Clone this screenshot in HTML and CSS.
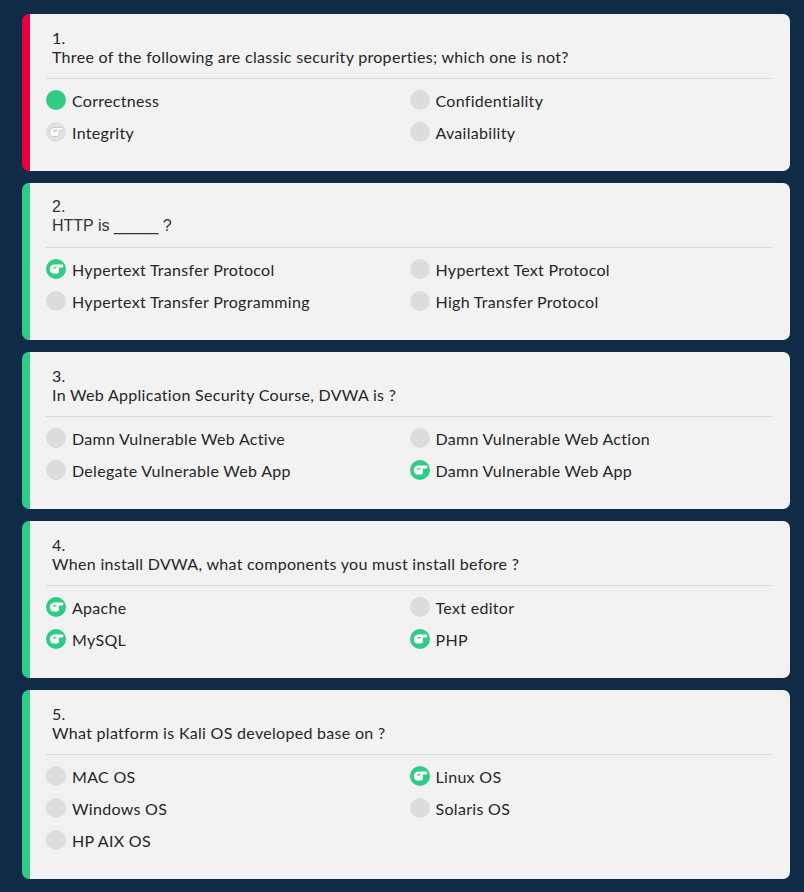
FILE: index.html
```html
<!DOCTYPE html>
<html>
<head>
<meta charset="utf-8">
<link rel="stylesheet" href="styles.css">
</head>
<body>
<svg width="0" height="0" class="defs">
  <defs>
    <symbol id="hand" viewBox="0 0 20 20">
      <path d="M3.8 10.4 C3.8 7.4 5.9 5.4 8.9 5.4 L15.9 5.4 C16.8 5.4 17.4 6.1 17.4 6.9 C17.4 7.7 16.8 8.4 15.9 8.4 L12.9 8.4 L12.9 12.6 C12.9 13.8 12.1 14.6 10.9 14.6 L8 14.6 C5.7 14.6 3.8 12.8 3.8 10.4 Z M6.9 8.9 C7.2 9.7 8 9.9 8.8 9.6 L11 8.6 L11 7.9 L8.4 8.1 Z" fill-rule="evenodd"/>
    </symbol>
  </defs>
</svg>
<main class="quiz">
  <section class="card wrong">
    <div class="question"><div>1.</div><div>Three of the following are classic security properties; which one is not?</div></div>
    <div class="options">
      <div class="opt"><span class="dot filled"></span>Correctness</div>
      <div class="opt"><span class="dot"></span>Confidentiality</div>
      <div class="opt"><span class="dot ghost"><svg><use href="#hand"/></svg></span>Integrity</div>
      <div class="opt"><span class="dot"></span>Availability</div>
    </div>
  </section>
  <section class="card right">
    <div class="question arial"><div>2.</div><div>HTTP is _____ ?</div></div>
    <div class="options">
      <div class="opt"><span class="dot pick"><svg><use href="#hand"/></svg></span>Hypertext Transfer Protocol</div>
      <div class="opt"><span class="dot"></span>Hypertext Text Protocol</div>
      <div class="opt"><span class="dot"></span>Hypertext Transfer Programming</div>
      <div class="opt"><span class="dot"></span>High Transfer Protocol</div>
    </div>
  </section>
  <section class="card right">
    <div class="question"><div>3.</div><div>In Web Application Security Course, DVWA is ?</div></div>
    <div class="options">
      <div class="opt"><span class="dot"></span>Damn Vulnerable Web Active</div>
      <div class="opt"><span class="dot"></span>Damn Vulnerable Web Action</div>
      <div class="opt"><span class="dot"></span>Delegate Vulnerable Web App</div>
      <div class="opt"><span class="dot pick"><svg><use href="#hand"/></svg></span>Damn Vulnerable Web App</div>
    </div>
  </section>
  <section class="card right">
    <div class="question"><div>4.</div><div>When install DVWA, what components you must install before ?</div></div>
    <div class="options">
      <div class="opt"><span class="dot pick"><svg><use href="#hand"/></svg></span>Apache</div>
      <div class="opt"><span class="dot"></span>Text editor</div>
      <div class="opt"><span class="dot pick"><svg><use href="#hand"/></svg></span>MySQL</div>
      <div class="opt"><span class="dot pick"><svg><use href="#hand"/></svg></span>PHP</div>
    </div>
  </section>
  <section class="card right">
    <div class="question"><div>5.</div><div>What platform is Kali OS developed base on ?</div></div>
    <div class="options">
      <div class="opt"><span class="dot"></span>MAC OS</div>
      <div class="opt"><span class="dot pick"><svg><use href="#hand"/></svg></span>Linux OS</div>
      <div class="opt"><span class="dot"></span>Windows OS</div>
      <div class="opt"><span class="dot"></span>Solaris OS</div>
      <div class="opt"><span class="dot"></span>HP AIX OS</div>
    </div>
  </section>
</main>
</body>
</html>
```
FILE: styles.css
```css
html, body {
  margin: 0;
  padding: 0;
}
body {
  background: #0f2b45;
  font-family: "Lato", "Noto Sans", sans-serif;
  color: #262626;
  font-size: 16px;
  letter-spacing: 0.3px;
}
.defs {
  position: absolute;
  width: 0;
  height: 0;
}
.quiz {
  display: flex;
  flex-direction: column;
  gap: 12px;
  padding: 14px 14px 13px 22px;
}
.card {
  background: #f2f2f2;
  border-radius: 7px;
  border-left: 8px solid #2ecc85;
  padding: 14px 17px 23px 16px;
}
.card.wrong {
  border-left-color: #e8003f;
}
.question {
  padding: 0 0 12px 6px;
  line-height: 19px;
  border-bottom: 1px solid #dcdcdc;
}
.question.arial {
  font-family: "Liberation Sans", Arial, sans-serif;
  color: #333333;
  letter-spacing: 0;
}
.options {
  display: grid;
  grid-template-columns: 1fr 1fr;
  margin-top: 5px;
}
.opt {
  display: flex;
  align-items: center;
  gap: 6px;
  height: 32px;
}
.dot {
  width: 20px;
  height: 20px;
  border-radius: 50%;
  background: #dcdcdc;
  flex: none;
  display: flex;
  align-items: center;
  justify-content: center;
}
.dot svg {
  width: 20px;
  height: 20px;
}
.dot.filled {
  background: #2ecc85;
}
.dot.pick {
  background: #2ecc85;
}
.dot.pick svg {
  fill: #ffffff;
}
.dot.ghost {
  background: #e0e0e0;
}
.dot.ghost svg {
  fill: #ffffff;
  stroke: #b5b5b5;
  stroke-width: 0.6;
}
```
